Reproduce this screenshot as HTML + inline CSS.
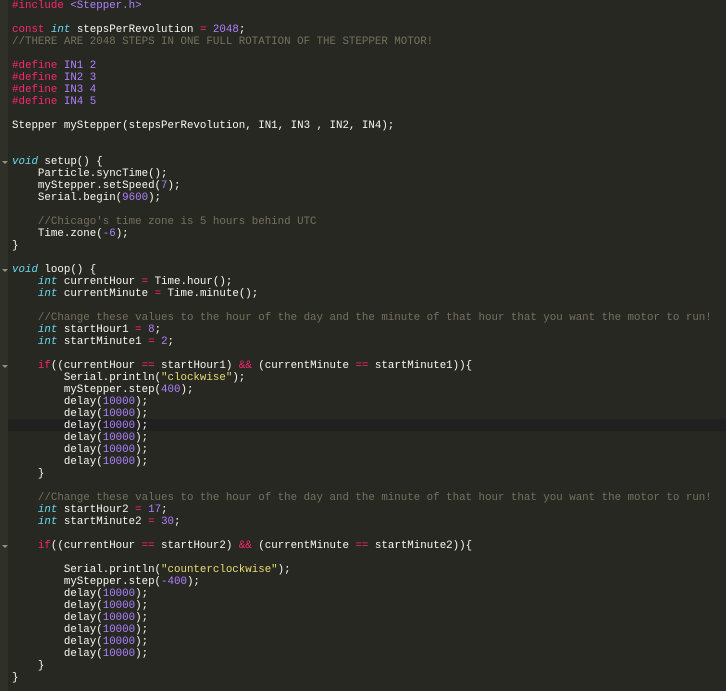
<!DOCTYPE html><html><head><style>
body{margin:0;width:726px;height:691px;background:#272822;overflow:hidden;position:relative;font-family:"Liberation Mono",monospace;font-size:10.8px;color:#f8f8f2}
#g{position:absolute;left:0;top:0;width:8px;height:691px;background:#2f3129}
#hl{position:absolute;left:8px;top:419px;width:718px;height:12px;background:#202020}
pre{position:absolute;left:12px;top:0px;margin:0;font:inherit;line-height:12px;white-space:pre}
.k{color:#f92672}.t{color:#66d9ef;font-style:italic}.n{color:#ae81ff}.s{color:#e6db74}.c{color:#75715e}
.f{position:absolute;left:2px;width:0;height:0;border-left:3px solid transparent;border-right:3px solid transparent;border-top:3px solid #8f908a}
</style></head><body><div id="g"></div><div id="hl"></div>
<div class="f" style="top:161px"></div><div class="f" style="top:269px"></div><div class="f" style="top:365px"></div><div class="f" style="top:545px"></div>
<pre><span class="k">#include</span> <span class="n">&lt;Stepper.h&gt;</span>

<span class="k">const</span> <span class="t">int</span> stepsPerRevolution <span class="k">=</span> <span class="n">2048</span>;
<span class="c">//THERE ARE 2048 STEPS IN ONE FULL ROTATION OF THE STEPPER MOTOR!</span>

<span class="k">#define</span> <span class="n">IN1 2</span>
<span class="k">#define</span> <span class="n">IN2 3</span>
<span class="k">#define</span> <span class="n">IN3 4</span>
<span class="k">#define</span> <span class="n">IN4 5</span>

Stepper myStepper(stepsPerRevolution, IN1, IN3 , IN2, IN4);


<span class="t">void</span> setup() {
    Particle.syncTime();
    myStepper.setSpeed(<span class="n">7</span>);
    Serial.begin(<span class="n">9600</span>);

    <span class="c">//Chicago's time zone is 5 hours behind UTC</span>
    Time.zone(<span class="n">-6</span>);
}

<span class="t">void</span> loop() {
    <span class="t">int</span> currentHour <span class="k">=</span> Time.hour();
    <span class="t">int</span> currentMinute <span class="k">=</span> Time.minute();

    <span class="c">//Change these values to the hour of the day and the minute of that hour that you want the motor to run!</span>
    <span class="t">int</span> startHour1 <span class="k">=</span> <span class="n">8</span>;
    <span class="t">int</span> startMinute1 <span class="k">=</span> <span class="n">2</span>;

    <span class="k">if</span>((currentHour <span class="k">==</span> startHour1) <span class="k">&amp;&amp;</span> (currentMinute <span class="k">==</span> startMinute1)){
        Serial.println(<span class="s">"clockwise"</span>);
        myStepper.step(<span class="n">400</span>);
        delay(<span class="n">10000</span>);
        delay(<span class="n">10000</span>);
        delay(<span class="n">10000</span>);
        delay(<span class="n">10000</span>);
        delay(<span class="n">10000</span>);
        delay(<span class="n">10000</span>);
    }

    <span class="c">//Change these values to the hour of the day and the minute of that hour that you want the motor to run!</span>
    <span class="t">int</span> startHour2 <span class="k">=</span> <span class="n">17</span>;
    <span class="t">int</span> startMinute2 <span class="k">=</span> <span class="n">30</span>;

    <span class="k">if</span>((currentHour <span class="k">==</span> startHour2) <span class="k">&amp;&amp;</span> (currentMinute <span class="k">==</span> startMinute2)){

        Serial.println(<span class="s">"counterclockwise"</span>);
        myStepper.step(<span class="n">-400</span>);
        delay(<span class="n">10000</span>);
        delay(<span class="n">10000</span>);
        delay(<span class="n">10000</span>);
        delay(<span class="n">10000</span>);
        delay(<span class="n">10000</span>);
        delay(<span class="n">10000</span>);
    }
}</pre></body></html>
